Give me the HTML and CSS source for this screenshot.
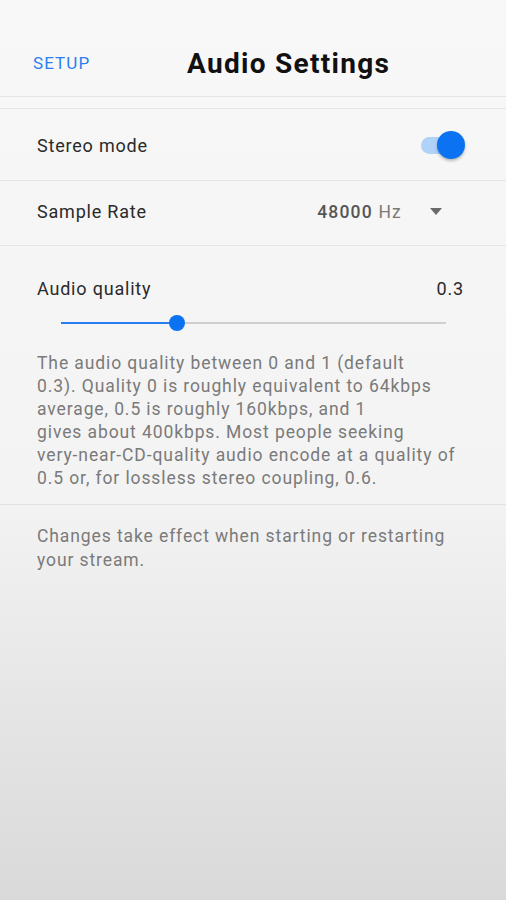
FILE: index.html
```
<!DOCTYPE html>
<html>
<head>
<meta charset="utf-8">
<link rel="stylesheet" href="styles.css">
</head>
<body>
<div class="page">
  <header class="header">
    <span class="back">SETUP</span>
    <h1 class="title">Audio Settings</h1>
  </header>
  <div class="spacer"></div>
  <div class="row row-stereo">
    <span class="label">Stereo mode</span>
    <span class="toggle"><span class="knob"></span></span>
  </div>
  <div class="row row-rate">
    <span class="label">Sample Rate</span>
    <span class="select">
      <span class="value"><b>48000</b> Hz</span>
      <svg class="caret" width="12" height="7" viewBox="0 0 12 7"><path d="M0 0 L12 0 L6 7 Z" fill="#6a6a6a"/></svg>
    </span>
  </div>
  <section class="quality">
    <div class="q-head">
      <span class="label">Audio quality</span>
      <span class="q-val">0.3</span>
    </div>
    <div class="slider">
      <div class="track"><div class="fill" style="width:30%"></div><div class="thumb" style="left:30%"></div></div>
    </div>
    <p class="desc">The audio quality between 0 and 1 (default<br>0.3). Quality 0 is roughly equivalent to 64kbps<br>average, 0.5 is roughly 160kbps, and 1<br>gives about 400kbps. Most people seeking<br>very-near-CD-quality audio encode at a quality of<br>0.5 or, for lossless stereo coupling, 0.6.</p>
  </section>
  <p class="note">Changes take effect when starting or restarting<br>your stream.</p>
</div>
</body>
</html>
```
FILE: styles.css
```
html, body {
  margin: 0;
  padding: 0;
}
body {
  width: 506px;
  height: 900px;
  background: linear-gradient(#f8f8f8 0px, #f3f3f3 500px, #d9d9d9 900px);
  font-family: Roboto, "Noto Sans", sans-serif;
  overflow: hidden;
}
.page {
  display: flex;
  flex-direction: column;
}
.header {
  height: 97px;
  display: flex;
  align-items: center;
  border-bottom: 1px solid #e4e4e4;
  box-sizing: border-box;
  padding-left: 33px;
  padding-top: 30px;
}
.back {
  color: #2a7ff2;
  font-size: 17px;
  letter-spacing: 1.1px;
  width: 154px;
}
.title {
  margin: 0;
  font-size: 28px;
  font-weight: 700;
  letter-spacing: 1.3px;
  color: #111;
}
.spacer {
  height: 12px;
  box-sizing: border-box;
  border-bottom: 1px solid #e6e6e6;
}
.row {
  display: flex;
  align-items: center;
  justify-content: space-between;
  padding: 0 47px 0 37px;
  border-bottom: 1px solid #e6e6e6;
  box-sizing: border-box;
}
.row-stereo {
  height: 72px;
  padding-top: 2px;
}
.row-rate {
  height: 65px;
  padding-right: 64px;
  padding-bottom: 3px;
}
.label {
  font-size: 18px;
  letter-spacing: 0.8px;
  color: #2a2a2a;
}
.toggle {
  position: relative;
  width: 38px;
  height: 17px;
  border-radius: 9px;
  background: #b1d2f8;
}
.knob {
  position: absolute;
  right: -6px;
  top: -6px;
  width: 28px;
  height: 28px;
  border-radius: 50%;
  background: #0b73f1;
  box-shadow: 0 2px 3px rgba(0,0,0,0.25);
}
.select {
  display: flex;
  align-items: center;
  gap: 28px;
}
.value {
  font-size: 17.5px;
  letter-spacing: 1.2px;
  color: #7a7a7a;
}
.value b {
  color: #555;
  font-weight: 500;
}
.caret {
  display: block;
}
.quality {
  padding: 32px 42px 14px 37px;
  border-bottom: 1px solid #e2e2e2;
}
.q-head {
  display: flex;
  justify-content: space-between;
  align-items: center;
}
.q-val {
  font-size: 18px;
  letter-spacing: 0.8px;
  color: #2a2a2a;
}
.slider {
  box-sizing: border-box;
  padding: 23px 18px 0 24px;
  height: 48px;
}
.track {
  position: relative;
  height: 2px;
  background: #cfcfcf;
}
.fill {
  height: 2px;
  background: #2b7ef1;
}
.thumb {
  position: absolute;
  top: -7px;
  width: 16px;
  height: 16px;
  margin-left: -8px;
  border-radius: 50%;
  background: #0b73f1;
}
.desc {
  margin: 5px 0 0;
  font-size: 17.5px;
  line-height: 23px;
  letter-spacing: 0.9px;
  color: #7a7a7a;
}
.note {
  margin: 0;
  padding: 19px 37px;
  font-size: 17.5px;
  line-height: 24px;
  letter-spacing: 0.9px;
  color: #7a7a7a;
}
```
